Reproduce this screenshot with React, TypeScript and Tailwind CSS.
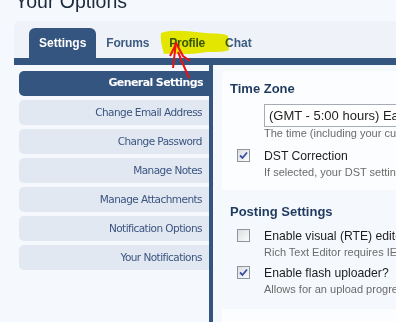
import React from "react";

const sideItems = [
    "Change Email Address",
    "Change Password",
    "Manage Notes",
    "Manage Attachments",
    "Notification Options",
    "Your Notifications",
];

const Check = ({ checked }: { checked: boolean }) => (
    <div className="w-[13px] h-[13px] shrink-0 border border-[#8f959c] bg-gradient-to-br from-[#dcdfe3] to-[#fbfbfb] flex items-center justify-center">
        {checked && (
            <svg width="9" height="9" viewBox="0 0 9 9">
                <path d="M1 4.5 L3.5 7 L8 1.5" fill="none" stroke="#3a4fa3" strokeWidth="1.8" />
            </svg>
        )}
    </div>
);

const Option = ({ checked, label, help }: { checked: boolean; label: string; help: string }) => (
    <div className="flex pl-[15px] gap-[14px]">
        <div className="pt-[1px]">
            <Check checked={checked} />
        </div>
        <div className="whitespace-nowrap">
            <div className="text-[12.2px] leading-[16px] text-[#1e1e1e]">{label}</div>
            <div className="text-[11px] leading-[16px] text-[#6b6b6b]">{help}</div>
        </div>
    </div>
);

export default function App() {
    return (
        <div className="relative w-[396px] h-[322px] overflow-hidden bg-[#f5f8fc] font-['Liberation_Sans',sans-serif]">
            <div className="pl-[15px] mt-[-11px] h-[32px] text-[19.5px] leading-[24px] text-[#1b2a3e] whitespace-nowrap">
                Your Options
            </div>

            <div className="ml-[14px] bg-[#eff3f9] rounded-tl-[6px]">
                <div className="flex pl-[15px] pt-[7px]">
                    <div className="h-[30px] px-[10px] flex items-center rounded-t-[6px] bg-[#345580] text-white font-bold text-[12px]">
                        Settings
                    </div>
                    <div className="h-[30px] px-[10px] flex items-center text-[#3d5b80] font-bold text-[12px] tracking-[-0.2px]">Forums</div>
                    <div className="h-[30px] px-[10px] flex items-center text-[#3d5b80] font-bold text-[12px] tracking-[-0.2px]">Profile</div>
                    <div className="h-[30px] px-[10px] flex items-center text-[#3d5b80] font-bold text-[12px]">Chat</div>
                </div>
                <div className="h-[7px] bg-[#345580]" />
            </div>

            <div className="flex ml-[14px] h-[260px]">
                <div className="w-[195px] shrink-0 pl-[5px] pt-[6px] flex flex-col gap-[4px] font-['DejaVu_Sans',sans-serif] whitespace-nowrap">
                    <div className="h-[25px] flex items-center justify-end pr-[6px] rounded-l-[5px] bg-[#345580] text-white font-bold text-[11px] tracking-[-0.6px]">
                        General Settings
                    </div>
                    {sideItems.map((item) => (
                        <div
                            key={item}
                            className="h-[25px] flex items-center justify-end pr-[7px] rounded-l-[5px] bg-[#e1e8f1] text-[#3b5480] text-[10.5px] tracking-[-0.55px]"
                        >
                            {item}
                        </div>
                    ))}
                </div>

                <div className="flex-1 min-w-0 border-l-[4px] border-[#345580] pl-[9px] pt-[6px]">
                    <div className="bg-[#fcfdfe] rounded-tl-[4px] h-[119px] pt-[9px]">
                        <div className="pl-[8px] text-[13px] leading-[18px] font-bold text-[#1f3a5f]">Time Zone</div>
                        <div className="flex pl-[42px] mt-[6px]">
                            <div className="whitespace-nowrap">
                                <div className="h-[23px] w-[200px] border border-[#a5acb5] bg-white pl-[4px] text-[13px] leading-[21px] text-[#1e1e1e]">
                                    (GMT - 5:00 hours) Eastern Time
                                </div>
                                <div className="text-[11px] leading-[12px] text-[#6b6b6b]">
                                    The time (including your current time zone)
                                </div>
                            </div>
                        </div>
                        <div className="mt-[9px]">
                            <Option checked={true} label="DST Correction" help="If selected, your DST settings" />
                        </div>
                    </div>

                    <div className="pl-[8px] mt-[13px] text-[13px] leading-[18px] font-bold text-[#1f3a5f]">Posting Settings</div>
                    <div className="mt-[7px] flex flex-col gap-[5px]">
                        <Option checked={false} label="Enable visual (RTE) editor" help="Rich Text Editor requires IE6" />
                        <Option checked={true} label="Enable flash uploader?" help="Allows for an upload progress bar" />
                    </div>
                    <div className="mt-[12px] h-[20px] bg-[#fcfdfe]" />
                </div>
            </div>

            <svg className="absolute left-0 top-0 mix-blend-multiply pointer-events-none" width="396" height="100">
                <path
                    d="M161 33 C170 29 190 31 205 33 C215 34 225 33 228 36 L229 50 C222 53 210 51 200 53 C185 55 172 53 164 54 C162 47 160 40 161 33 Z"
                    fill="#f2f200"
                />
            </svg>
            <svg className="absolute left-0 top-0 pointer-events-none" width="396" height="100">
                <path d="M176 42 L173 68" fill="none" stroke="#ee1111" strokeWidth="2" />
                <path d="M176 43 L183 56 L190 61" fill="none" stroke="#ee1111" strokeWidth="2" />
                <path d="M176 44 L170 56" fill="none" stroke="#ee1111" strokeWidth="2" />
                <path d="M178 52 L183 64 L189 78" fill="none" stroke="#ee1111" strokeWidth="2" />
            </svg>
        </div>
    );
}
